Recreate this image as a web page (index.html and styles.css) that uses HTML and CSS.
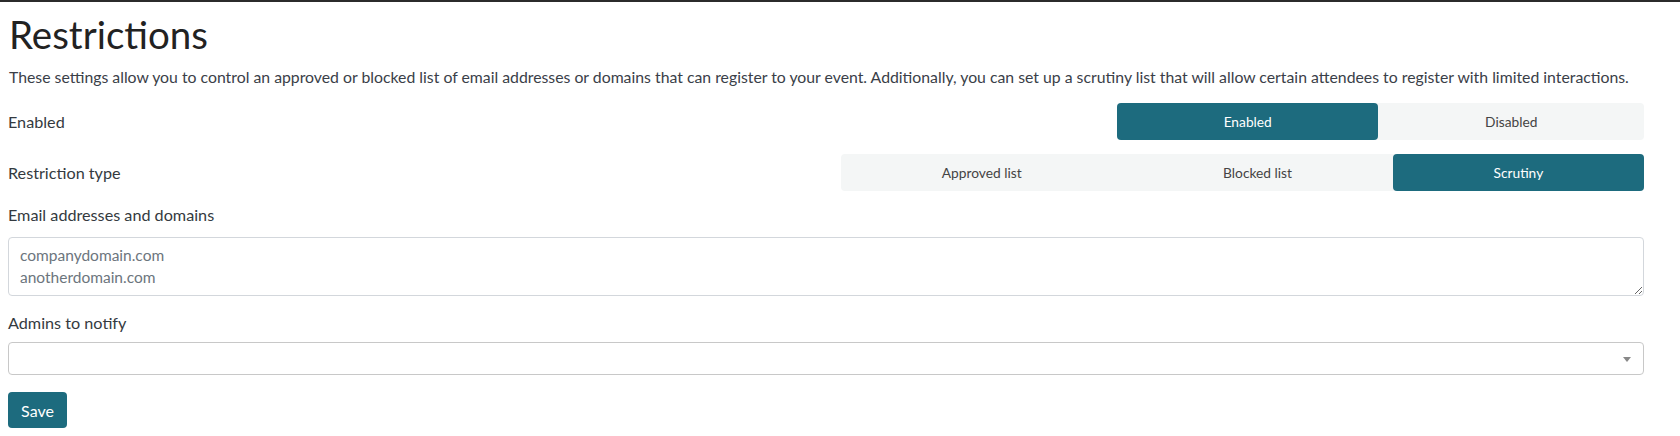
FILE: index.html
```html
<!DOCTYPE html>
<html lang="en">
<head>
    <meta charset="UTF-8">
    <title>Restrictions</title>
    <link rel="stylesheet" href="styles.css">
</head>
<body>
<div class="page">
    <h1 class="title">Restrictions</h1>
    <p class="intro">These settings allow you to control an approved or blocked list of email addresses or domains that can register to your event. Additionally, you can set up a scrutiny list that will allow certain attendees to register with limited interactions.</p>

    <div class="row">
        <label class="label">Enabled</label>
        <div class="toggle toggle-state">
            <a href="javascript:" class="opt active">Enabled</a>
            <a href="javascript:" class="opt">Disabled</a>
        </div>
    </div>

    <div class="row">
        <label class="label">Restriction type</label>
        <div class="toggle toggle-type">
            <a href="javascript:" class="opt">Approved list</a>
            <a href="javascript:" class="opt">Blocked list</a>
            <a href="javascript:" class="opt active">Scrutiny</a>
        </div>
    </div>

    <label class="label field-label">Email addresses and domains</label>
    <textarea class="domains" placeholder="companydomain.com&#10;anotherdomain.com"></textarea>

    <label class="label field-label admins-label">Admins to notify</label>
    <div class="select">
        <span class="caret"></span>
    </div>

    <button class="save">Save</button>
</div>
</body>
</html>
```

FILE: styles.css
```css
* {
    margin: 0;
    padding: 0;
    box-sizing: border-box;
}

body {
    border-top: 2px solid #2b2b2b;
    font-family: Lato, "Open Sans", sans-serif;
    color: #343a40;
    background: #fff;
}

.page {
    padding: 0 36px 0 8px;
}

.title {
    font-size: 38.5px;
    font-weight: 400;
    line-height: 44px;
    margin: 10px 0 0 1px;
    color: #222;
}

.intro {
    font-size: 15.8px;
    line-height: 20px;
    margin-top: 11px;
    margin-left: 1px;
    color: #3a4048;
}

.label {
    display: block;
    font-size: 16.2px;
    line-height: 20px;
    color: #343a40;
}

.row {
    display: flex;
    justify-content: space-between;
    align-items: center;
    height: 37px;
}

.row + .row {
    margin-top: 14px;
}

.row:first-of-type {
    margin-top: 16px;
}

.toggle {
    display: flex;
    background: #f4f6f6;
    border-radius: 4px;
    height: 37px;
}

.toggle-state {
    width: 527px;
}

.toggle-type {
    width: 803px;
}

.opt {
    flex: 1 1 auto;
    display: flex;
    align-items: center;
    justify-content: center;
    text-decoration: none;
    font-size: 13.75px;
    color: #444;
    border-radius: 4px;
}

.opt.active {
    background: #1d6b7e;
    color: #fff;
}

.field-label {
    margin-top: 14px;
}

.domains {
    display: block;
    width: 100%;
    height: 59px;
    margin-top: 12px;
    padding: 6px 11px;
    border: 1px solid #d3d7dc;
    border-radius: 4px;
    font-family: inherit;
    font-size: 15.5px;
    line-height: 22px;
    resize: vertical;
}

.domains::placeholder {
    color: #6c757d;
}

.admins-label {
    margin-top: 17px;
}

.select {
    position: relative;
    height: 33px;
    margin-top: 9px;
    border: 1px solid #c8c8c8;
    border-radius: 4px;
}

.caret {
    position: absolute;
    right: 12px;
    top: 14px;
    border-left: 4px solid transparent;
    border-right: 4px solid transparent;
    border-top: 5px solid #888;
}

.save {
    display: block;
    margin-top: 17px;
    width: 59px;
    height: 36px;
    border: 0;
    border-radius: 4px;
    background: #1d6b7e;
    color: #fff;
    font-family: inherit;
    font-size: 16px;
}
```
